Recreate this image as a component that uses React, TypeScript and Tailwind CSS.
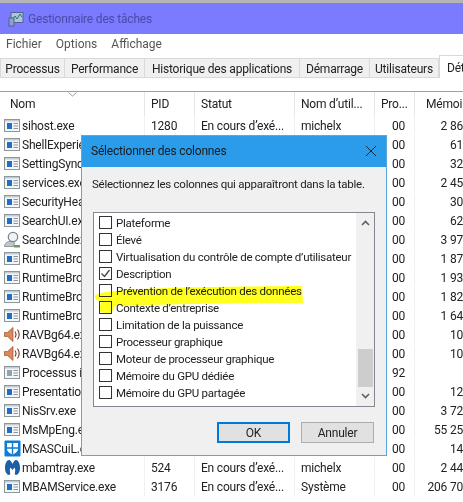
const font = "font-['Roboto',sans-serif]";

type Row = { name: string; icon: string; pid: string; status: string; user: string; cpu: string; mem: string };

const run = "En cours d’exé...";

const rows: Row[] = [
  { name: "sihost.exe", icon: "app", pid: "1280", status: run, user: "michelx", cpu: "00", mem: "2 86" },
  { name: "ShellExperience", icon: "app", pid: "", status: "", user: "", cpu: "00", mem: "61" },
  { name: "SettingSyncHost", icon: "app", pid: "", status: "", user: "", cpu: "00", mem: "32" },
  { name: "services.exe", icon: "app", pid: "", status: "", user: "", cpu: "00", mem: "2 45" },
  { name: "SecurityHealth", icon: "app", pid: "", status: "", user: "", cpu: "00", mem: "30" },
  { name: "SearchUI.exe", icon: "app", pid: "", status: "", user: "", cpu: "00", mem: "62" },
  { name: "SearchIndexer", icon: "search", pid: "", status: "", user: "", cpu: "00", mem: "3 97" },
  { name: "RuntimeBroker", icon: "app", pid: "", status: "", user: "", cpu: "00", mem: "1 87" },
  { name: "RuntimeBroker", icon: "app", pid: "", status: "", user: "", cpu: "00", mem: "1 93" },
  { name: "RuntimeBroker", icon: "app", pid: "", status: "", user: "", cpu: "00", mem: "1 82" },
  { name: "RuntimeBroker", icon: "app", pid: "", status: "", user: "", cpu: "00", mem: "1 64" },
  { name: "RAVBg64.exe", icon: "speaker", pid: "", status: "", user: "", cpu: "00", mem: "10" },
  { name: "RAVBg64.exe", icon: "speaker", pid: "", status: "", user: "", cpu: "00", mem: "10" },
  { name: "Processus inactif", icon: "idle", pid: "", status: "", user: "", cpu: "92", mem: "" },
  { name: "PresentationFont", icon: "app", pid: "", status: "", user: "", cpu: "00", mem: "12" },
  { name: "NisSrv.exe", icon: "app", pid: "", status: "", user: "", cpu: "00", mem: "3 72" },
  { name: "MsMpEng.exe", icon: "app", pid: "", status: "", user: "", cpu: "00", mem: "55 25" },
  { name: "MSASCuiL.exe", icon: "shield", pid: "", status: "", user: "", cpu: "00", mem: "14" },
  { name: "mbamtray.exe", icon: "mb", pid: "524", status: run, user: "michelx", cpu: "00", mem: "2 44" },
  { name: "MBAMService.exe", icon: "app", pid: "3176", status: run, user: "Système", cpu: "00", mem: "206 70" },
];

const options = [
  { label: "Plateforme" },
  { label: "Élevé" },
  { label: "Virtualisation du contrôle de compte d’utilisateur" },
  { label: "Description", checked: true },
  { label: "Prévention de l’exécution des données" },
  { label: "Contexte d’entreprise" },
  { label: "Limitation de la puissance" },
  { label: "Processeur graphique" },
  { label: "Moteur de processeur graphique" },
  { label: "Mémoire du GPU dédiée" },
  { label: "Mémoire du GPU partagée" },
];

function RowIcon({ kind }: { kind: string }) {
  if (kind === "search") {
    return (
      <svg width="17" height="17" viewBox="0 0 17 17" className="shrink-0">
        <path d="M0.500 15.500c0-3 2.500-5 6-5 2 0 3 .5 4 1.500l-1 3.500z" fill="#c3c7cb" stroke="#7c858c" strokeWidth="0.800" />
        <circle cx="9" cy="6" r="4.700" fill="#eef3f7" stroke="#7c858c" strokeWidth="1.300" />
        <path d="M10 14h6v2.500h-6z" fill="#6f9a5f" />
      </svg>
    );
  }
  if (kind === "speaker") {
    return (
      <svg width="17" height="17" viewBox="0 0 17 17" className="shrink-0">
        <path d="M0.500 6.500h3L9 1.500v14l-5.500-5h-3z" fill="#d98a5b" stroke="#a0522d" strokeWidth="0.700" />
        <path d="M11 5.500c1.200 1.800 1.200 4.200 0 6M13.500 3.500c2 3 2 7 0 10" fill="none" stroke="#6d3a30" strokeWidth="1.100" />
      </svg>
    );
  }
  if (kind === "shield") {
    return (
      <svg width="17" height="17" viewBox="0 0 17 17" className="shrink-0">
        <rect x="0.500" y="0.500" width="16" height="16" rx="1" fill="#0f7bd4" />
        <path d="M3 3h11v6c0 2.500-2.500 4.500-5.500 5.500C5.500 13.500 3 11.500 3 9z" fill="#fff" />
        <path d="M8.500 3v11.500M3 8h11" stroke="#0f7bd4" strokeWidth="1.400" />
      </svg>
    );
  }
  if (kind === "mb") {
    return (
      <svg width="17" height="17" viewBox="0 0 17 17" className="shrink-0">
        <path d="M1 9c0-5 2-8 4-8 1.500 0 2.500 2 3.500 4 1-2 2-4 3.500-4 2 0 4 3 4 8 0 4-2 7-4 7-1 0-1.500-1-1-3 .5-2 0-4-.5-4.500L8.500 11 6.500 8.500C6 9 5.500 11 6 13c.5 2 0 3-1 3-2 0-4-3-4-7z" fill="#1b5fa8" />
      </svg>
    );
  }
  return (
    <svg width="17" height="15" viewBox="0 0 17 15" className="shrink-0">
      <rect x="0.500" y="1.500" width="15" height="12" fill="#f4f6f8" stroke="#8d969d" />
      <rect x="1" y="2" width="14" height="1.500" fill="#c5ccd2" />
      <rect x="3" y="5" width="5" height="6" fill={kind === "idle" ? "#8fa3b5" : "#1f6fc4"} />
      <path d="M9.500 5.500H14M9.500 8H14M9.500 10.500H14" stroke="#8d969d" />
    </svg>
  );
}

function Tab({ label, className }: { label: string; className: string }) {
  return (
    <div className={`h-[20px] shrink-0 border border-l-0 border-[#d9d9d9] bg-[#f0f0f0] text-center leading-[20px] ${className}`}>
      {label}
    </div>
  );
}

function HeaderCell({ label, className }: { label: string; className: string }) {
  return <div className={`h-[24px] shrink-0 truncate border-r border-[#e5e5e5] pt-[3px] ${className}`}>{label}</div>;
}

export default function App() {
  return (
    <div className={`relative h-[502px] w-[463px] overflow-hidden bg-white text-[12px] leading-[18px] tracking-[-0.2px] text-[#222] ${font}`}>
      <div className="h-[3px] bg-[#b5b5b5]" />
      <div className="flex h-[31px] items-center gap-[4px] bg-[#7b7bff] pl-[8px] text-[#4a4aa8]">
        <svg width="16" height="16" viewBox="0 0 16 16">
          <rect x="3" y="1.500" width="12" height="10" fill="#a9c4e6" stroke="#56608c" />
          <path d="M4 8l3-3 2 3 3-5 2 3" fill="none" stroke="#2e7d4f" />
          <rect x="1" y="7" width="5" height="8" fill="#8f9fd0" stroke="#56608c" />
        </svg>
        <span>Gestionnaire des tâches</span>
      </div>
      <div className="flex h-[19px] items-center gap-[14px] pl-[6px] tracking-normal text-[#555]">
        <span>Fichier</span>
        <span>Options</span>
        <span>Affichage</span>
      </div>
      <div className="flex h-[25px] items-end overflow-hidden whitespace-nowrap">
        <div className="h-[20px] w-[1px] shrink-0 bg-[#d9d9d9]" />
        <Tab label="Processus" className="w-[64px]" />
        <Tab label="Performance" className="w-[80px]" />
        <Tab label="Historique des applications" className="w-[155px]" />
        <Tab label="Démarrage" className="w-[70px]" />
        <Tab label="Utilisateurs" className="w-[69px]" />
        <div className="h-[23px] w-[40px] shrink-0 border-l border-t border-[#d9d9d9] bg-white pl-[7px] pt-[3px]">Détails</div>
      </div>
      <div className="h-[13px]" />
      <div className="relative flex border-t border-[#a0a0a0] whitespace-nowrap">
        <svg width="9" height="5" viewBox="0 0 9 5" className="absolute left-[68px] top-0">
          <path d="M0.500 0.500l4 3.500 4-3.500" fill="none" stroke="#999" />
        </svg>
        <HeaderCell label="Nom" className="w-[145px] pl-[10px]" />
        <HeaderCell label="PID" className="w-[50px] pl-[6px]" />
        <HeaderCell label="Statut" className="w-[100px] pl-[6px]" />
        <HeaderCell label="Nom d’util..." className="w-[80px] pl-[6px]" />
        <HeaderCell label="Pro..." className="w-[40px] pl-[6px]" />
        <div className="h-[24px] flex-1 pl-[11px] pt-[3px]">Mémoi</div>
      </div>
      <div className="flex flex-col whitespace-nowrap">
        {rows.map((row, i) => (
          <div key={i} className="flex h-[19px] items-center">
            <div className="flex w-[145px] shrink-0 items-center gap-[1px] border-r border-[#f0f0f0] pl-[4px]">
              <RowIcon kind={row.icon} />
              <span>{row.name}</span>
            </div>
            <div className="w-[50px] shrink-0 border-r border-[#f0f0f0] pl-[6px]">{row.pid || "\u00a0"}</div>
            <div className="w-[100px] shrink-0 border-r border-[#f0f0f0] pl-[6px]">{row.status || "\u00a0"}</div>
            <div className="w-[80px] shrink-0 border-r border-[#f0f0f0] pl-[6px]">{row.user || "\u00a0"}</div>
            <div className="w-[40px] shrink-0 border-r border-[#f0f0f0] pl-[17px]">{row.cpu}</div>
            <div className="flex-1 overflow-hidden text-right">{row.mem}</div>
          </div>
        ))}
      </div>

      <div className="absolute left-[81px] top-[135px] flex h-[321px] w-[306px] flex-col border border-[#59a9dc] bg-[#f0f0f0]">
        <div className="flex h-[31px] shrink-0 items-center justify-between bg-[#2b9cea] pb-[2px] pl-[9px] pr-[9px] text-[#1a1a1a]">
          <span>Sélectionner des colonnes</span>
          <svg width="12" height="12" viewBox="0 0 12 12">
            <path d="M1 1l10 10M11 1L1 11" stroke="#1a2a3a" strokeWidth="1" />
          </svg>
        </div>
        <div className="whitespace-nowrap pl-[10px] pt-[8px] text-[11.5px] tracking-[-0.26px]">Sélectionnez les colonnes qui apparaîtront dans la table.</div>
        <div className="relative ml-[11px] mt-[19px] flex h-[195px] w-[282px] shrink-0 border border-[#828790] bg-white">
          <div className="flex min-w-0 flex-1 flex-col pl-[5px] pt-[1px] text-[11.5px] tracking-[-0.26px]">
            {options.map((opt) => (
              <label key={opt.label} className="flex h-[17px] shrink-0 items-center gap-[4px] whitespace-nowrap">
                <span className="flex h-[13px] w-[13px] shrink-0 items-center justify-center border border-[#333]">
                  {opt.checked && (
                    <svg width="11" height="11" viewBox="0 0 11 11">
                      <path d="M1.500 5.500l3 3 5-6.500" fill="none" stroke="#444" strokeWidth="1.300" />
                    </svg>
                  )}
                </span>
                <span>{opt.label}</span>
              </label>
            ))}
          </div>
          <div className="flex w-[18px] shrink-0 flex-col items-center justify-between bg-[#f0f0f0] py-[7px]">
            <svg width="9" height="6" viewBox="0 0 9 6">
              <path d="M1 5l3.500-3.500L8 5" fill="none" stroke="#606060" strokeWidth="1.600" />
            </svg>
            <svg width="9" height="6" viewBox="0 0 9 6">
              <path d="M1 1l3.500 3.500L8 1" fill="none" stroke="#606060" strokeWidth="1.600" />
            </svg>
          </div>
          <div className="absolute right-[1px] top-[136px] h-[38px] w-[15px] bg-[#cdcdcd]" />
        </div>
        <div className="mt-[15px] flex justify-end gap-[11px] pr-[12px]">
          <button className="h-[21px] w-[73px] border-2 border-[#0078d7] bg-[#e1e1e1]">OK</button>
          <button className="h-[21px] w-[73px] border border-[#adadad] bg-[#e1e1e1]">Annuler</button>
        </div>
      </div>

      <svg width="463" height="502" viewBox="0 0 463 502" className="pointer-events-none absolute left-0 top-0 mix-blend-multiply">
        <path d="M95 296c3-7 70-9 207-10l1 17c-60 0-135 1-188 3l-3 6c-2 2-10 2-12-1-1-3 0-7 1-9-3-1-7-3-6-6z" fill="#ffff20" />
      </svg>
    </div>
  );
}
